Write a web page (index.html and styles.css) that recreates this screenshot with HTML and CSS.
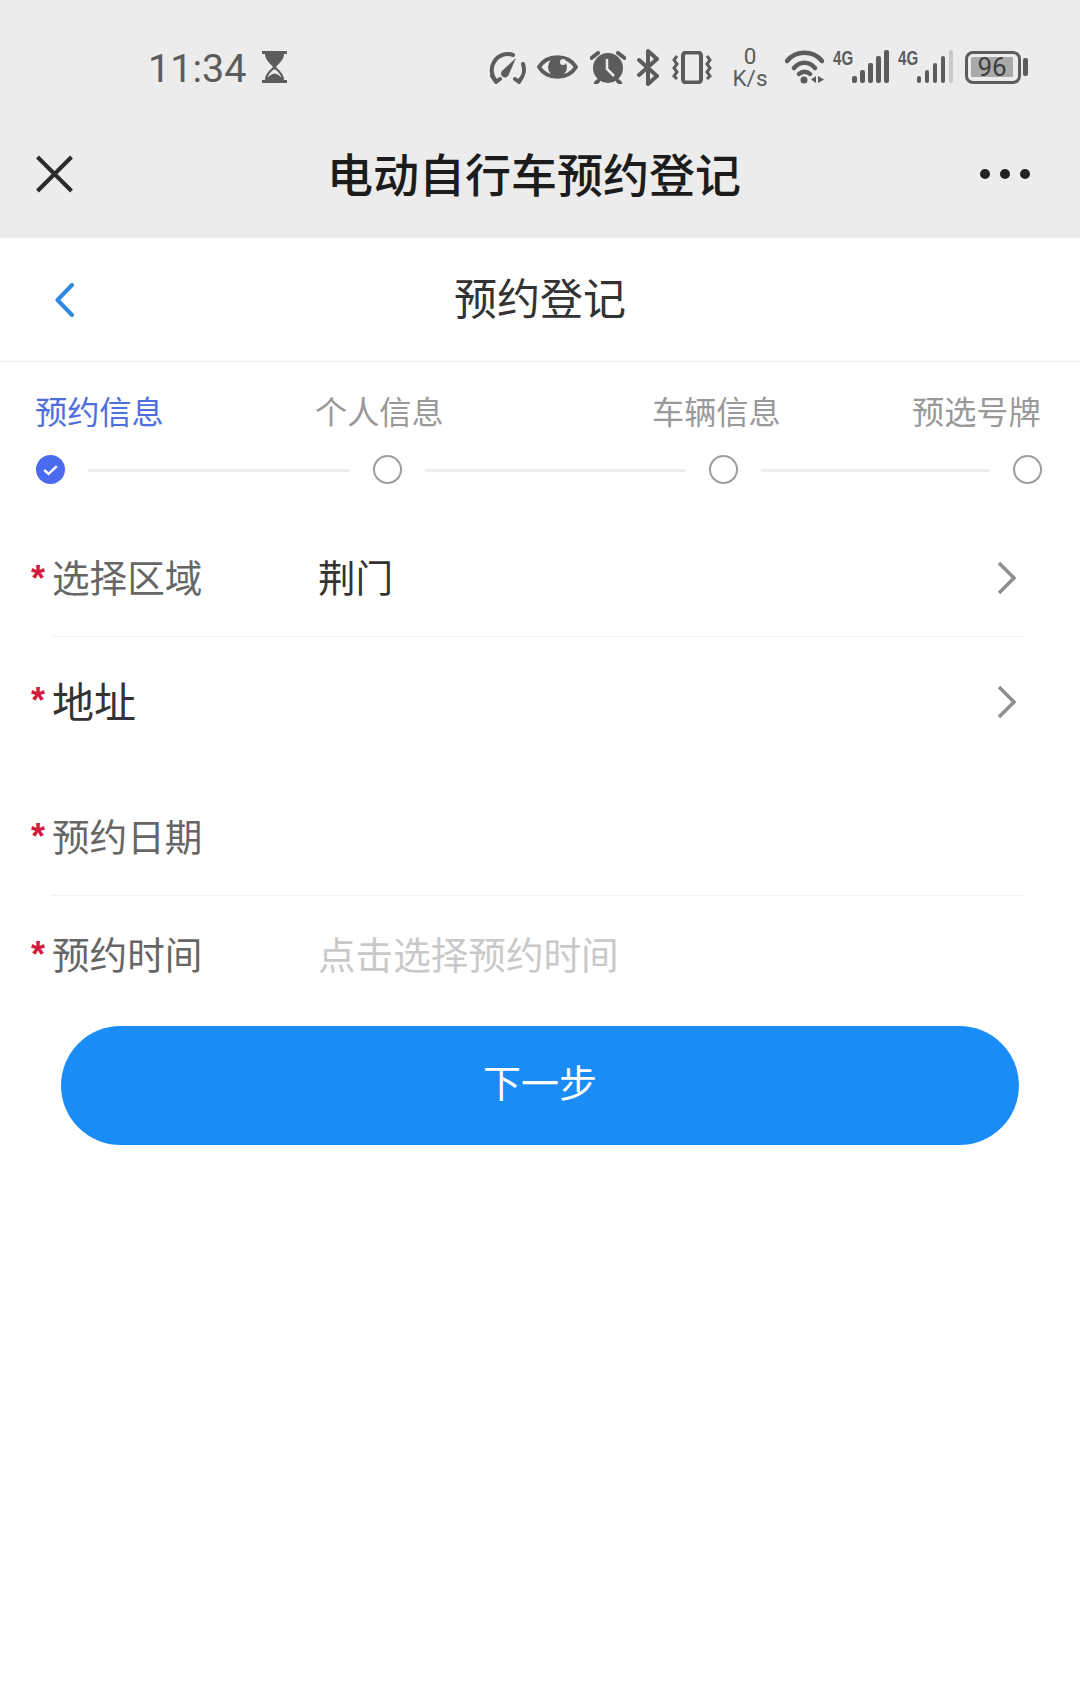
FILE: index.html
```html
<!DOCTYPE html>
<html lang="zh-CN">
<head>
<meta charset="utf-8">
<title>电动自行车预约登记</title>
<link rel="stylesheet" href="styles.css">
</head>
<body>
<header class="chrome">
  <div class="status">
    <span class="time">11:34</span>
    <svg class="ic hourglass" width="25" height="32" viewBox="0 0 25 32"><path class="f" d="M0 0H25V3H22C22 9 17 12 14 16C17 19 22 23 22 29H25V32H0V29H3C3 23 8 19 11 16C8 12 3 9 3 3H0Z"/><path class="bgf" d="M11.500 18.500C9 21 6.500 23 5.500 26.500C8 24 10 23 12.500 22.500C15 23 17 24 19.500 26.500C18.500 23 16 21 13.500 18.500Z"/></svg>
    <svg class="ic gauge" width="37" height="33" viewBox="0 0 37 33"><path class="s" d="M7 30A16 16 0 0 1 24 4M34 13A16 16 0 0 1 30 30M3 25L7 31L11 28M26 28L30 31L33 26"/><path class="f" d="M27 7L20 23A4 4 0 1 1 14 19Z"/></svg>
    <svg class="ic eye" width="41" height="26" viewBox="0 0 41 26"><path class="s" d="M2 13C10 0 31 0 39 13C31 26 10 26 2 13Z"/><circle class="f" cx="20.500" cy="13" r="9.500"/><circle class="bgf" cx="26" cy="8" r="3"/></svg>
    <svg class="ic alarm" width="36" height="33" viewBox="0 0 36 33"><circle class="f" cx="18" cy="17" r="15"/><path class="hand" d="M17 8V18L24 25"/><path class="s" d="M1.500 7L8 2M34.500 7L28 2M6 32L8 30M30 32L28 30"/></svg>
    <svg class="ic bt" width="22" height="37" viewBox="0 0 22 37"><path class="s" d="M2 11L20 27L11 35V2L20 10L2 26"/></svg>
    <svg class="ic vib" width="40" height="33" viewBox="0 0 40 33"><rect class="s" x="11" y="1.500" width="18" height="30" rx="3"/><path class="thin" d="M5 5L2 9L5 13L2 17L5 21L2 25L5 28M35 5L38 9L35 13L38 17L35 21L38 25L35 28"/></svg>
    <div class="speed"><span>0</span><span>K/s</span></div>
    <svg class="ic wifi" width="39" height="34" viewBox="0 0 39 34"><path class="sw" d="M2 11C11 0 28 0 37 11M9 18C15 11 24 11 30 18M14 24C17 21 22 21 25 24"/><circle class="f" cx="19" cy="30" r="3.500"/><path class="f" d="M31 26V33L26 29.500ZM33 26V33L39 29.500Z"/></svg>
    <div class="net"><span class="g">4G</span>
      <div class="bars"><i class="b1"></i><i class="b2"></i><i class="b3"></i><i class="b4"></i><i class="b5"></i></div></div>
    <div class="net net2"><span class="g">4G</span>
      <div class="bars"><i class="b1"></i><i class="b2"></i><i class="b3"></i><i class="b4"></i><i class="b5 off"></i></div></div>
    <div class="batt"><div class="fill">96</div></div>
    <div class="cap"></div>
  </div>
  <div class="appbar">
    <svg class="close" width="37" height="38" viewBox="0 0 37 38"><path d="M1.500 2L35.500 36M35.500 2L1.500 36"/></svg>
    <div class="apptitle">电动自行车预约登记</div>
    <div class="more"><i></i><i></i><i></i></div>
  </div>
</header>
<nav class="subbar">
  <svg class="back" width="19" height="34" viewBox="0 0 19 34"><path d="M17 2L2.500 17L17 32"/></svg>
  <div class="subtitle">预约登记</div>
  <span></span>
</nav>
<section class="steps">
  <div class="labels">
    <span class="active">预约信息</span><span>个人信息</span><span>车辆信息</span><span>预选号牌</span>
  </div>
  <div class="track">
    <svg class="dot" width="29" height="29" viewBox="0 0 30 30"><circle cx="15" cy="15" r="15" fill="#4a6bee"/><path d="M8.500 15.500L13 19.500L21.500 11.500" fill="none" stroke="#fff" stroke-width="2.500"/></svg>
    <i class="line w1"></i><b class="ring"></b><i class="line w1"></i><b class="ring"></b><i class="line w2"></i><b class="ring"></b>
  </div>
</section>
<form class="form">
  <div class="row r1"><span class="star">*</span><div class="body lined"><span class="label">选择区域</span><span class="value">荆门</span><svg class="chev" width="20" height="34" viewBox="0 0 20 34"><path d="M2 2L17 17L2 32"/></svg></div></div>
  <div class="row r2"><span class="star">*</span><div class="body"><span class="label big">地址</span><svg class="chev end" width="20" height="34" viewBox="0 0 20 34"><path d="M2 2L17 17L2 32"/></svg></div></div>
  <div class="row r3"><span class="star">*</span><div class="body lined"><span class="label">预约日期</span></div></div>
  <div class="row r4"><span class="star">*</span><div class="body"><span class="label">预约时间</span><span class="value hint">点击选择预约时间</span></div></div>
  <button class="next" type="button">下一步</button>
</form>
</body>
</html>
```
FILE: styles.css
```css
* { box-sizing: border-box; }
html, body { margin: 0; padding: 0; background: #fff; }
body { width: 1080px; height: 1685px; overflow: hidden; font-family: "Noto Sans CJK SC", "Noto Sans", sans-serif; }

.chrome { background: #ececec; height: 238px; }
.status { height: 134px; display: flex; align-items: center; padding-left: 148px; color: #5c5c5c; }
.time { font: 400 39.500px/1 Roboto, sans-serif; width: 114px; padding-top: 4px; }
.ic { flex: none; display: block; }
.s { fill: none; stroke: #5c5c5c; stroke-width: 4; stroke-linecap: round; stroke-linejoin: round; }
.sw { fill: none; stroke: #5c5c5c; stroke-width: 4.500; stroke-linecap: round; }
.thin { fill: none; stroke: #5c5c5c; stroke-width: 3; }
.f { fill: #5c5c5c; }
.bgf { fill: #ececec; }
.hand { fill: none; stroke: #ececec; stroke-width: 2.500; }
.gauge { margin-left: 202px; }
.eye { margin-left: 11px; }
.alarm { margin-left: 12px; }
.bt { margin-left: 11px; }
.vib { margin-left: 13px; }
.speed { width: 36px; margin-left: 20px; display: flex; flex-direction: column; align-items: center; gap: 2px; font: 400 22.500px/20px Roboto, sans-serif; }
.wifi { margin-left: 17px; }
.net { display: flex; align-items: flex-start; height: 34px; margin-left: 9px; }
.net2 { margin-left: 9px; }
.g { display: block; width: 19px; font: 700 21px/16px "Liberation Sans", sans-serif; white-space: nowrap; transform: scaleX(0.72); transform-origin: left center; }
.bars { display: flex; align-items: flex-end; gap: 3.500px; height: 33px; }
.bars i { width: 4.500px; background: #5c5c5c; border-radius: 2px; }
.b1 { height: 7px; } .b2 { height: 13px; } .b3 { height: 20px; } .b4 { height: 27px; } .b5 { height: 33px; }
.bars .off { background: #c9c9c9; }
.batt { width: 56px; height: 33px; margin-left: 12px; border: 3.500px solid #5c5c5c; border-radius: 8px; padding: 3px; }
.fill { width: 42px; height: 20px; background: #aaa; border-radius: 1px; color: #3f3f3f; font: 400 26px/21px Roboto, sans-serif; text-align: center; }
.cap { width: 5px; height: 18px; margin-left: 2px; background: #5c5c5c; border-radius: 2px; }

.appbar { display: grid; grid-template-columns: 37px 1fr 50px; align-items: center; padding: 0 50px 0 36px; height: 80px; }
.close path { fill: none; stroke: #2b2b2b; stroke-width: 4; }
.apptitle { font-size: 46px; font-weight: 500; line-height: 60px; color: #1c1c1c; text-align: center; padding: 0 0 4px 15px; }
.more { display: flex; justify-content: space-between; }
.more i { width: 10px; height: 10px; border-radius: 50%; background: #222; }

.subbar { height: 124px; border-bottom: 1px solid #eee; display: grid; grid-template-columns: 110px 1fr 110px; align-items: center; }
.back { margin-left: 55px; }
.back path { fill: none; stroke: #2d8ae0; stroke-width: 4; stroke-linecap: round; stroke-linejoin: round; }
.subtitle { font-size: 43px; line-height: 56px; color: #333; text-align: center; padding-bottom: 7px; }

.steps { padding: 25px 0 0; height: 158px; }
.labels { display: grid; grid-template-columns: 280px 337px 260px auto; padding-left: 35px; font-size: 32.200px; line-height: 46px; color: #999; }
.active { color: #4f6ee0; }
.track { display: flex; align-items: center; gap: 23px; padding-left: 36px; margin-top: 22px; }
.dot { flex: none; }
.line { height: 3px; margin-top: 2px; background: #eee; display: block; }
.w1 { width: 261.500px; }
.w2 { width: 229px; }
.ring { width: 29px; height: 29px; border: 2px solid #9d9d9d; border-radius: 50%; flex: none; }

.form { display: flex; flex-direction: column; }
.row { display: flex; padding-left: 30px; }
.r1 { height: 117px; padding-top: 1px; }
.r2 { height: 131px; }
.r3 { height: 128px; padding-top: 12px; }
.r4 { height: 120px; }
.star { width: 22px; flex: none; padding-left: 1px; color: #d3193c; font: 700 36px/1 "Liberation Sans", sans-serif; padding-top: 40px; }
.r2 .star { padding-top: 46px; }
.r3 .star { padding-top: 39px; }
.r4 .star { padding-top: 41px; }
.body { flex: 1; margin-right: 56px; display: flex; align-items: center; }
.lined { border-bottom: 1px solid #f3f3f3; }
.label { width: 266px; flex: none; font-size: 37.600px; line-height: 50px; color: #666; padding-bottom: 6px; }
.big { font-size: 42px; color: #333; width: auto; }
.value { flex: 1; font-size: 37.600px; line-height: 50px; color: #333; padding-bottom: 6px; }
.hint { color: #c9c9c9; }
.chev { flex: none; margin: 0 7px 2px 0; }
.end { margin-left: auto; }
.chev path { fill: none; stroke: #8e8e8e; stroke-width: 3.500; }
.next { align-self: flex-start; width: 958px; height: 119px; margin: 10px 0 0 61px; border: 0; border-radius: 60px; background: #1a8cf5; color: #fff; font-family: inherit; font-size: 38px; padding: 0 0 10px; }
```
